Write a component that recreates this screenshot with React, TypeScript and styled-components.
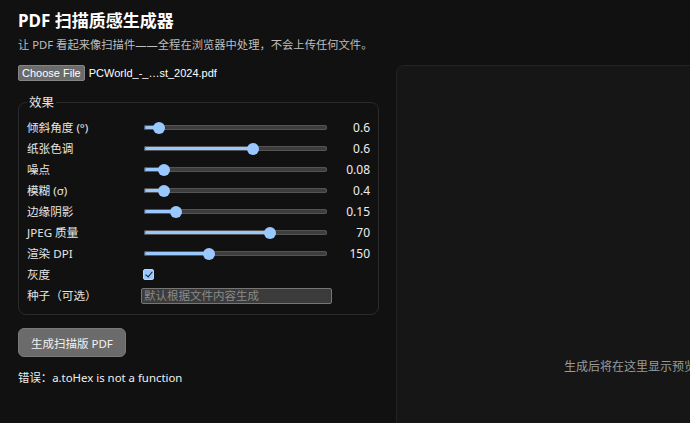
import React from 'react';
import styled, { createGlobalStyle } from 'styled-components';

const FONT = `"Noto Sans", "Noto Sans CJK SC", sans-serif`;

type SliderDef = {
  label: string;
  min: number;
  max: number;
  step: number;
  value: number;
  display: string;
};

const SLIDERS: SliderDef[] = [
  { label: '倾斜角度 (°)', min: 0, max: 11, step: 0.1, value: 0.6, display: '0.6' },
  { label: '纸张色调', min: 0, max: 1, step: 0.01, value: 0.6, display: '0.6' },
  { label: '噪点', min: 0, max: 1, step: 0.01, value: 0.08, display: '0.08' },
  { label: '模糊 (σ)', min: 0, max: 5, step: 0.1, value: 0.4, display: '0.4' },
  { label: '边缘阴影', min: 0, max: 1, step: 0.01, value: 0.15, display: '0.15' },
  { label: 'JPEG 质量', min: 0, max: 100, step: 1, value: 70, display: '70' },
  { label: '渲染 DPI', min: 72, max: 300, step: 1, value: 150, display: '150' },
];

export default function App() {
  return (
    <>
      <GlobalStyle />
      <Page>
        <Title>PDF 扫描质感生成器</Title>
        <Subtitle>让 PDF 看起来像扫描件——全程在浏览器中处理，不会上传任何文件。</Subtitle>
        <Main>
          <Controls>
            <FilePicker>
              <HiddenInput type="file" accept="application/pdf" />
              <FileButton>Choose File</FileButton>
              <FileName>PCWorld_-_…st_2024.pdf</FileName>
            </FilePicker>

            <Effects>
              <Legend>效果</Legend>
              <Rows>
                {SLIDERS.map((s) => {
                  const frac = (s.value - s.min) / (s.max - s.min);
                  return (
                    <React.Fragment key={s.label}>
                      <Label>{s.label}</Label>
                      <Range
                        type="range"
                        min={s.min}
                        max={s.max}
                        step={s.step}
                        defaultValue={s.value}
                        $fill={6 + frac * 171}
                      />
                      <Value>{s.display}</Value>
                    </React.Fragment>
                  );
                })}
                <Label>灰度</Label>
                <Check type="checkbox" defaultChecked />
                <span />
                <Label>种子（可选）</Label>
                <SeedInput placeholder="默认根据文件内容生成" />
                <span />
              </Rows>
            </Effects>

            <GenerateButton>生成扫描版 PDF</GenerateButton>
            <ErrorText>错误：a.toHex is not a function</ErrorText>
          </Controls>

          <Preview>生成后将在这里显示预览。</Preview>
        </Main>
      </Page>
    </>
  );
}

const GlobalStyle = createGlobalStyle`
  html, body {
    margin: 0;
    padding: 0;
    overflow: hidden;
    background: #111111;
    color: #eeeeee;
    color-scheme: dark;
    font-family: ${FONT};
  }
`;

const Page = styled.div`
  padding: 0 18px;
  width: max-content;
`;

const Title = styled.h1`
  margin: 9px 0 0;
  font-size: 17px;
  line-height: 24px;
  font-weight: 700;
  color: #ffffff;
`;

const Subtitle = styled.p`
  margin: 4px 0 0;
  font-size: 11.3px;
  line-height: 16px;
  color: #bdbdbd;
`;

const Main = styled.div`
  display: grid;
  grid-template-columns: 360px 480px;
  column-gap: 18px;
  margin-top: 12px;
  align-items: start;
`;

const Controls = styled.div`
  display: flex;
  flex-direction: column;
  align-items: flex-start;
`;

const FilePicker = styled.label`
  display: flex;
  align-items: center;
  gap: 4px;
  height: 16px;
  font-family: "Liberation Sans", Arial, sans-serif;
  font-size: 11px;
  cursor: pointer;
`;

const HiddenInput = styled.input`
  display: none;
`;

const FileButton = styled.span`
  box-sizing: border-box;
  height: 16px;
  line-height: 14px;
  padding: 0 3px;
  background: #6b6b6b;
  border: 1px solid #858585;
  border-radius: 2px;
  color: #ffffff;
`;

const FileName = styled.span`
  color: #ffffff;
`;

const Effects = styled.fieldset`
  box-sizing: border-box;
  width: 360px;
  margin: 13px 0 0;
  padding: 8px 8px 10px;
  border: 1px solid #2a2a2a;
  border-radius: 8px;
`;

const Legend = styled.legend`
  padding: 0 2px;
  font-size: 12.5px;
  line-height: 17px;
  color: #e6e6e6;
`;

const Rows = styled.div`
  display: grid;
  grid-template-columns: 109px 1fr 33px;
  grid-auto-rows: 17px;
  column-gap: 5px;
  row-gap: 4px;
  align-items: center;
`;

const Label = styled.span`
  font-size: 11.6px;
  line-height: 17px;
  color: #e6e6e6;
  white-space: nowrap;
`;

const Value = styled.span`
  font-size: 12px;
  line-height: 17px;
  text-align: right;
  color: #eeeeee;
`;

const Range = styled.input<{ $fill: number }>`
  -webkit-appearance: none;
  appearance: none;
  width: 183px;
  height: 12px;
  margin: 0 3px;
  padding: 0;
  background: transparent;

  &::-webkit-slider-runnable-track {
    height: 5px;
    border-radius: 3px;
    background: linear-gradient(
      to right,
      #99c8ff ${({ $fill }) => $fill}px,
      #3d3d3d ${({ $fill }) => $fill}px
    );
    box-shadow: inset 0 0 0 1px #545454;
  }

  &::-webkit-slider-thumb {
    -webkit-appearance: none;
    width: 12px;
    height: 12px;
    margin-top: -3.5px;
    border-radius: 50%;
    background: #99c8ff;
    border: none;
  }
`;

const Check = styled.input`
  -webkit-appearance: none;
  appearance: none;
  position: relative;
  width: 11px;
  height: 11px;
  margin: 0 0 0 2px;
  border-radius: 2px;
  background: #99c8ff;
  border: 1px solid #b8d9ff;
  box-sizing: border-box;

  &:checked::after {
    content: '';
    position: absolute;
    left: 3px;
    top: 0px;
    width: 3px;
    height: 6px;
    border: solid #1a1a1a;
    border-width: 0 1.5px 1.5px 0;
    transform: rotate(40deg);
  }
`;

const SeedInput = styled.input`
  box-sizing: border-box;
  width: 191px;
  height: 16px;
  margin: 0;
  padding: 0 2px;
  background: #3b3b3b;
  border: 1px solid #767676;
  border-radius: 2px;
  color: #eeeeee;
  font-family: ${FONT};
  font-size: 11.5px;
  outline: none;

  &::placeholder {
    color: #8a8a8a;
  }
`;

const GenerateButton = styled.button`
  box-sizing: border-box;
  height: 29px;
  margin-top: 13px;
  padding: 0 12px;
  background: #6b6b6b;
  border: 1px solid #7a7a7a;
  border-radius: 6px;
  color: #f2f2f2;
  font-family: ${FONT};
  font-size: 11.5px;
  cursor: pointer;
`;

const ErrorText = styled.div`
  margin-top: 13px;
  font-size: 11.4px;
  line-height: 16px;
  color: #f0f0f0;
`;

const Preview = styled.div`
  box-sizing: border-box;
  width: 480px;
  min-height: 602px;
  display: flex;
  align-items: center;
  justify-content: center;
  background: #161616;
  border: 1px solid #232323;
  border-radius: 8px;
  color: #9a9a9a;
  font-size: 12px;
`;
